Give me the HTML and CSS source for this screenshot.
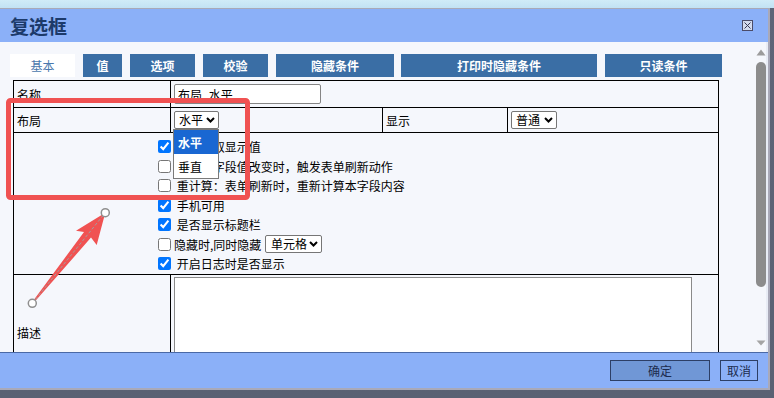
FILE: index.html
```html
<!DOCTYPE html>
<html lang="zh">
<head>
<meta charset="utf-8">
<title>复选框</title>
<link rel="stylesheet" href="styles.css">
</head>
<body>
<div class="dialog">
  <header class="titlebar">
    <h1 class="title">复选框</h1>
    <span class="close" aria-label="关闭">
      <svg width="11" height="11" viewBox="0 0 11 11"><rect x="0.5" y="0.5" width="10" height="10" fill="#d3daee" stroke="#4b4b68"/><path d="M2.5 2.5 L8.5 8.5 M8.5 2.5 L2.5 8.5" stroke="#3a3a55" stroke-width="1"/></svg>
    </span>
  </header>
  <div class="content">
    <div class="main">
      <nav class="tabs">
        <span class="tab tab-active tab-w65">基本</span>
        <span class="tab tab-w39">值</span>
        <span class="tab tab-w65">选项</span>
        <span class="tab tab-w65">校验</span>
        <span class="tab tab-w118">隐藏条件</span>
        <span class="tab tab-w196">打印时隐藏条件</span>
        <span class="tab tab-w117">只读条件</span>
      </nav>
      <div class="form">
        <div class="cell">名称</div>
        <div class="cell span3"><input class="text-input" type="text" value="布局_水平"></div>

        <div class="cell">布局</div>
        <div class="cell select-cell">
          <span class="select-box box-layout">
            <select class="sel"><option>水平</option><option>垂直</option></select>
            <svg class="chev" width="9" height="6" viewBox="0 0 9 6"><path d="M1 1 L4.5 4.5 L8 1" fill="none" stroke="#000" stroke-width="2"/></svg>
          </span>
          <ul class="dropdown">
            <li class="opt opt-active">水平</li>
            <li class="opt">垂直</li>
          </ul>
        </div>
        <div class="cell">显示</div>
        <div class="cell">
          <span class="select-box box-show">
            <select class="sel"><option>普通</option></select>
            <svg class="chev" width="9" height="6" viewBox="0 0 9 6"><path d="M1 1 L4.5 4.5 L8 1" fill="none" stroke="#000" stroke-width="2"/></svg>
          </span>
        </div>

        <div class="cell span4 checks">
          <label class="check"><input type="checkbox" checked> 只读时取显示值</label>
          <label class="check"><input type="checkbox"> 刷新：字段值改变时，触发表单刷新动作</label>
          <label class="check"><input type="checkbox"> 重计算：表单刷新时，重新计算本字段内容</label>
          <label class="check"><input type="checkbox" checked> 手机可用</label>
          <label class="check"><input type="checkbox" checked> 是否显示标题栏</label>
          <label class="check"><input type="checkbox">隐藏时,同时隐藏 <span class="select-box box-cell"><select class="sel"><option>单元格</option></select><svg class="chev" width="9" height="6" viewBox="0 0 9 6"><path d="M1 1 L4.5 4.5 L8 1" fill="none" stroke="#000" stroke-width="2"/></svg></span></label>
          <label class="check"><input type="checkbox" checked> 开启日志时是否显示</label>
        </div>

        <div class="cell">描述</div>
        <div class="cell span3 area-cell"><textarea class="textarea"></textarea></div>
      </div>
    </div>
    <div class="scrollbar">
      <svg class="sb-arrow" width="10" height="7" viewBox="0 0 10 7"><path d="M5 0.5 L9.5 6.5 L0.5 6.5 Z" fill="#9c9c9c"/></svg>
      <div class="sb-thumb"></div>
      <div class="sb-space"></div>
      <svg class="sb-arrow" width="10" height="6" viewBox="0 0 10 6"><path d="M0.5 0.5 L9.5 0.5 L5 5.5 Z" fill="#a4a4a4"/></svg>
    </div>
  </div>
  <footer class="footer">
    <button class="btn btn-ok" type="button">确定</button>
    <button class="btn btn-cancel" type="button">取消</button>
  </footer>
</div>

<svg class="annot" width="774" height="398" viewBox="0 0 774 398">
  <rect x="8.5" y="100.5" width="239" height="97" rx="2" fill="none" stroke="#f05252" stroke-width="5"/>
  <polygon points="31.7,302.8 84.0,232.0 76,230.7 105.3,212.7 96.7,245 91.0,237.6 32.9,303.8" fill="#f05252"/>
  <line x1="32.3" y1="303.3" x2="105.3" y2="212.7" stroke="#a0a0a0" stroke-width="1" stroke-dasharray="3 2"/>
  <circle cx="32.3" cy="303.3" r="4" fill="#fff" stroke="#8f8f8f" stroke-width="1.5"/>
  <circle cx="105.3" cy="212.7" r="4" fill="#fff" stroke="#8f8f8f" stroke-width="1.5"/>
</svg>
</body>
</html>
```

FILE: styles.css
```css
* {
  box-sizing: border-box;
}

html,
body {
  margin: 0;
  padding: 0;
}

body {
  position: relative;
  width: 774px;
  height: 398px;
  overflow: hidden;
  background: linear-gradient(to bottom, #d0ebf8 0, #c2e2f4 8px, #5e6578 8px, #5a6173 100%);
  font-family: "Noto Sans CJK SC", "Microsoft YaHei", sans-serif;
  font-size: 12px;
  color: #000;
}

.dialog {
  margin-top: 8px;
  width: 770px;
  border-top: 1px solid #a9a9b8;
  border-right: 2px solid #a9a9b8;
  border-bottom: 2px solid #a9a9b8;
  display: flex;
  flex-direction: column;
}

.titlebar {
  height: 33px;
  background: #8bb0f8;
  display: flex;
  align-items: center;
  justify-content: space-between;
  padding: 0 15px 0 10px;
}

.title {
  margin: 0;
  font-size: 19px;
  font-weight: bold;
  color: #1c3a6a;
  line-height: 1;
}

.close {
  display: flex;
}

.content {
  height: 310px;
  background: #f5f7fc;
  display: flex;
}

.main {
  flex: 1;
  overflow: hidden;
  padding: 12px 0 0 10px;
}

.tabs {
  display: flex;
  gap: 8px;
  height: 23px;
}

.tab {
  display: flex;
  align-items: center;
  justify-content: center;
  background: #3a6ea5;
  color: #fff;
  font-weight: bold;
  font-size: 12px;
}

.tab-active {
  background: #fff;
  color: #4a78ad;
  font-weight: normal;
}

.tab-w65 { width: 65px; }
.tab-w39 { width: 39px; }
.tab-w118 { width: 118px; }
.tab-w196 { width: 196px; margin-left: -1px; }
.tab-w117 { width: 117px; }

.form {
  margin: 3px 0 0 3px;
  width: 706px;
  display: grid;
  grid-template-columns: 157px 212px 125px 211px;
  grid-template-rows: 27px 25px 142px 116px;
  border-left: 1px solid #000;
  border-top: 1px solid #000;
}

.cell {
  border-right: 1px solid #000;
  border-bottom: 1px solid #000;
  padding: 0 3px;
  display: flex;
  align-items: center;
}

.span3 {
  grid-column: span 3;
}

.span4 {
  grid-column: span 4;
}

.text-input {
  width: 147px;
  height: 20px;
  margin: 0;
  padding: 0 3px;
  border: 1px solid #858585;
  border-radius: 2px;
  background: #fff;
  font: 12px "Noto Sans CJK SC", sans-serif;
  color: #000;
}

.select-cell {
  position: relative;
}

.select-box {
  position: relative;
  display: inline-flex;
  height: 18px;
}

.sel {
  appearance: none;
  -webkit-appearance: none;
  width: 100%;
  height: 18px;
  margin: 0;
  padding: 0 0 0 4px;
  border: 1px solid #767676;
  border-radius: 2px;
  background: #fff;
  font: 12px "Noto Sans CJK SC", sans-serif;
  line-height: 16px;
  color: #000;
}

.chev {
  position: absolute;
  right: 4px;
  top: 6px;
  pointer-events: none;
}

.box-layout {
  width: 45px;
}

.box-show {
  width: 46px;
}

.box-cell {
  width: 57px;
  margin-left: 1px;
}

.box-cell .sel {
  padding-left: 5px;
}

.dropdown {
  position: absolute;
  left: 2px;
  top: 21px;
  z-index: 5;
  width: 46px;
  margin: 0;
  padding: 0;
  list-style: none;
  background: #fff;
  border: 1px solid #7a7a7a;
}

.opt {
  height: 24px;
  padding-left: 4px;
  display: flex;
  align-items: center;
  font-size: 12px;
}

.opt-active {
  background: #1967d2;
  color: #fff;
  font-weight: bold;
}

.checks {
  display: block;
  padding: 4px 0 0 140px;
}

.check {
  display: flex;
  align-items: center;
  height: 19.5px;
  white-space: pre;
}

.check input {
  width: 13px;
  height: 13px;
  margin: 0 3px 0 4px;
}

.area-cell {
  align-items: flex-start;
  padding-top: 2px;
}

.textarea {
  width: 518px;
  height: 110px;
  margin: 0;
  border: 1px solid #8a8a8a;
  background: #fff;
  resize: none;
}

.scrollbar {
  width: 14px;
  display: flex;
  flex-direction: column;
  align-items: flex-start;
  padding: 7px 0 6px 2px;
  border-right: 2px solid #e8ecf5;
}

.sb-arrow {
  display: block;
}

.sb-thumb {
  width: 10px;
  height: 225px;
  margin-top: 6px;
  background: #8c8c8c;
  border-radius: 5px;
}

.sb-space {
  flex: 1;
}

.footer {
  height: 36px;
  background: #8bb0f8;
  border-top: 1px solid #4a69a6;
  display: flex;
  justify-content: flex-end;
  align-items: center;
  gap: 10px;
  padding-right: 10px;
}

.btn {
  height: 21px;
  padding: 0;
  border: 1px solid #2d3f66;
  font: 12px "Noto Sans CJK SC", sans-serif;
  color: #1c2b4e;
}

.btn-ok {
  width: 100px;
  background: #7097d6;
}

.btn-cancel {
  width: 38px;
  background: #8bb0f8;
}

.annot {
  position: absolute;
  left: 0;
  top: 0;
  z-index: 10;
  pointer-events: none;
}
```
